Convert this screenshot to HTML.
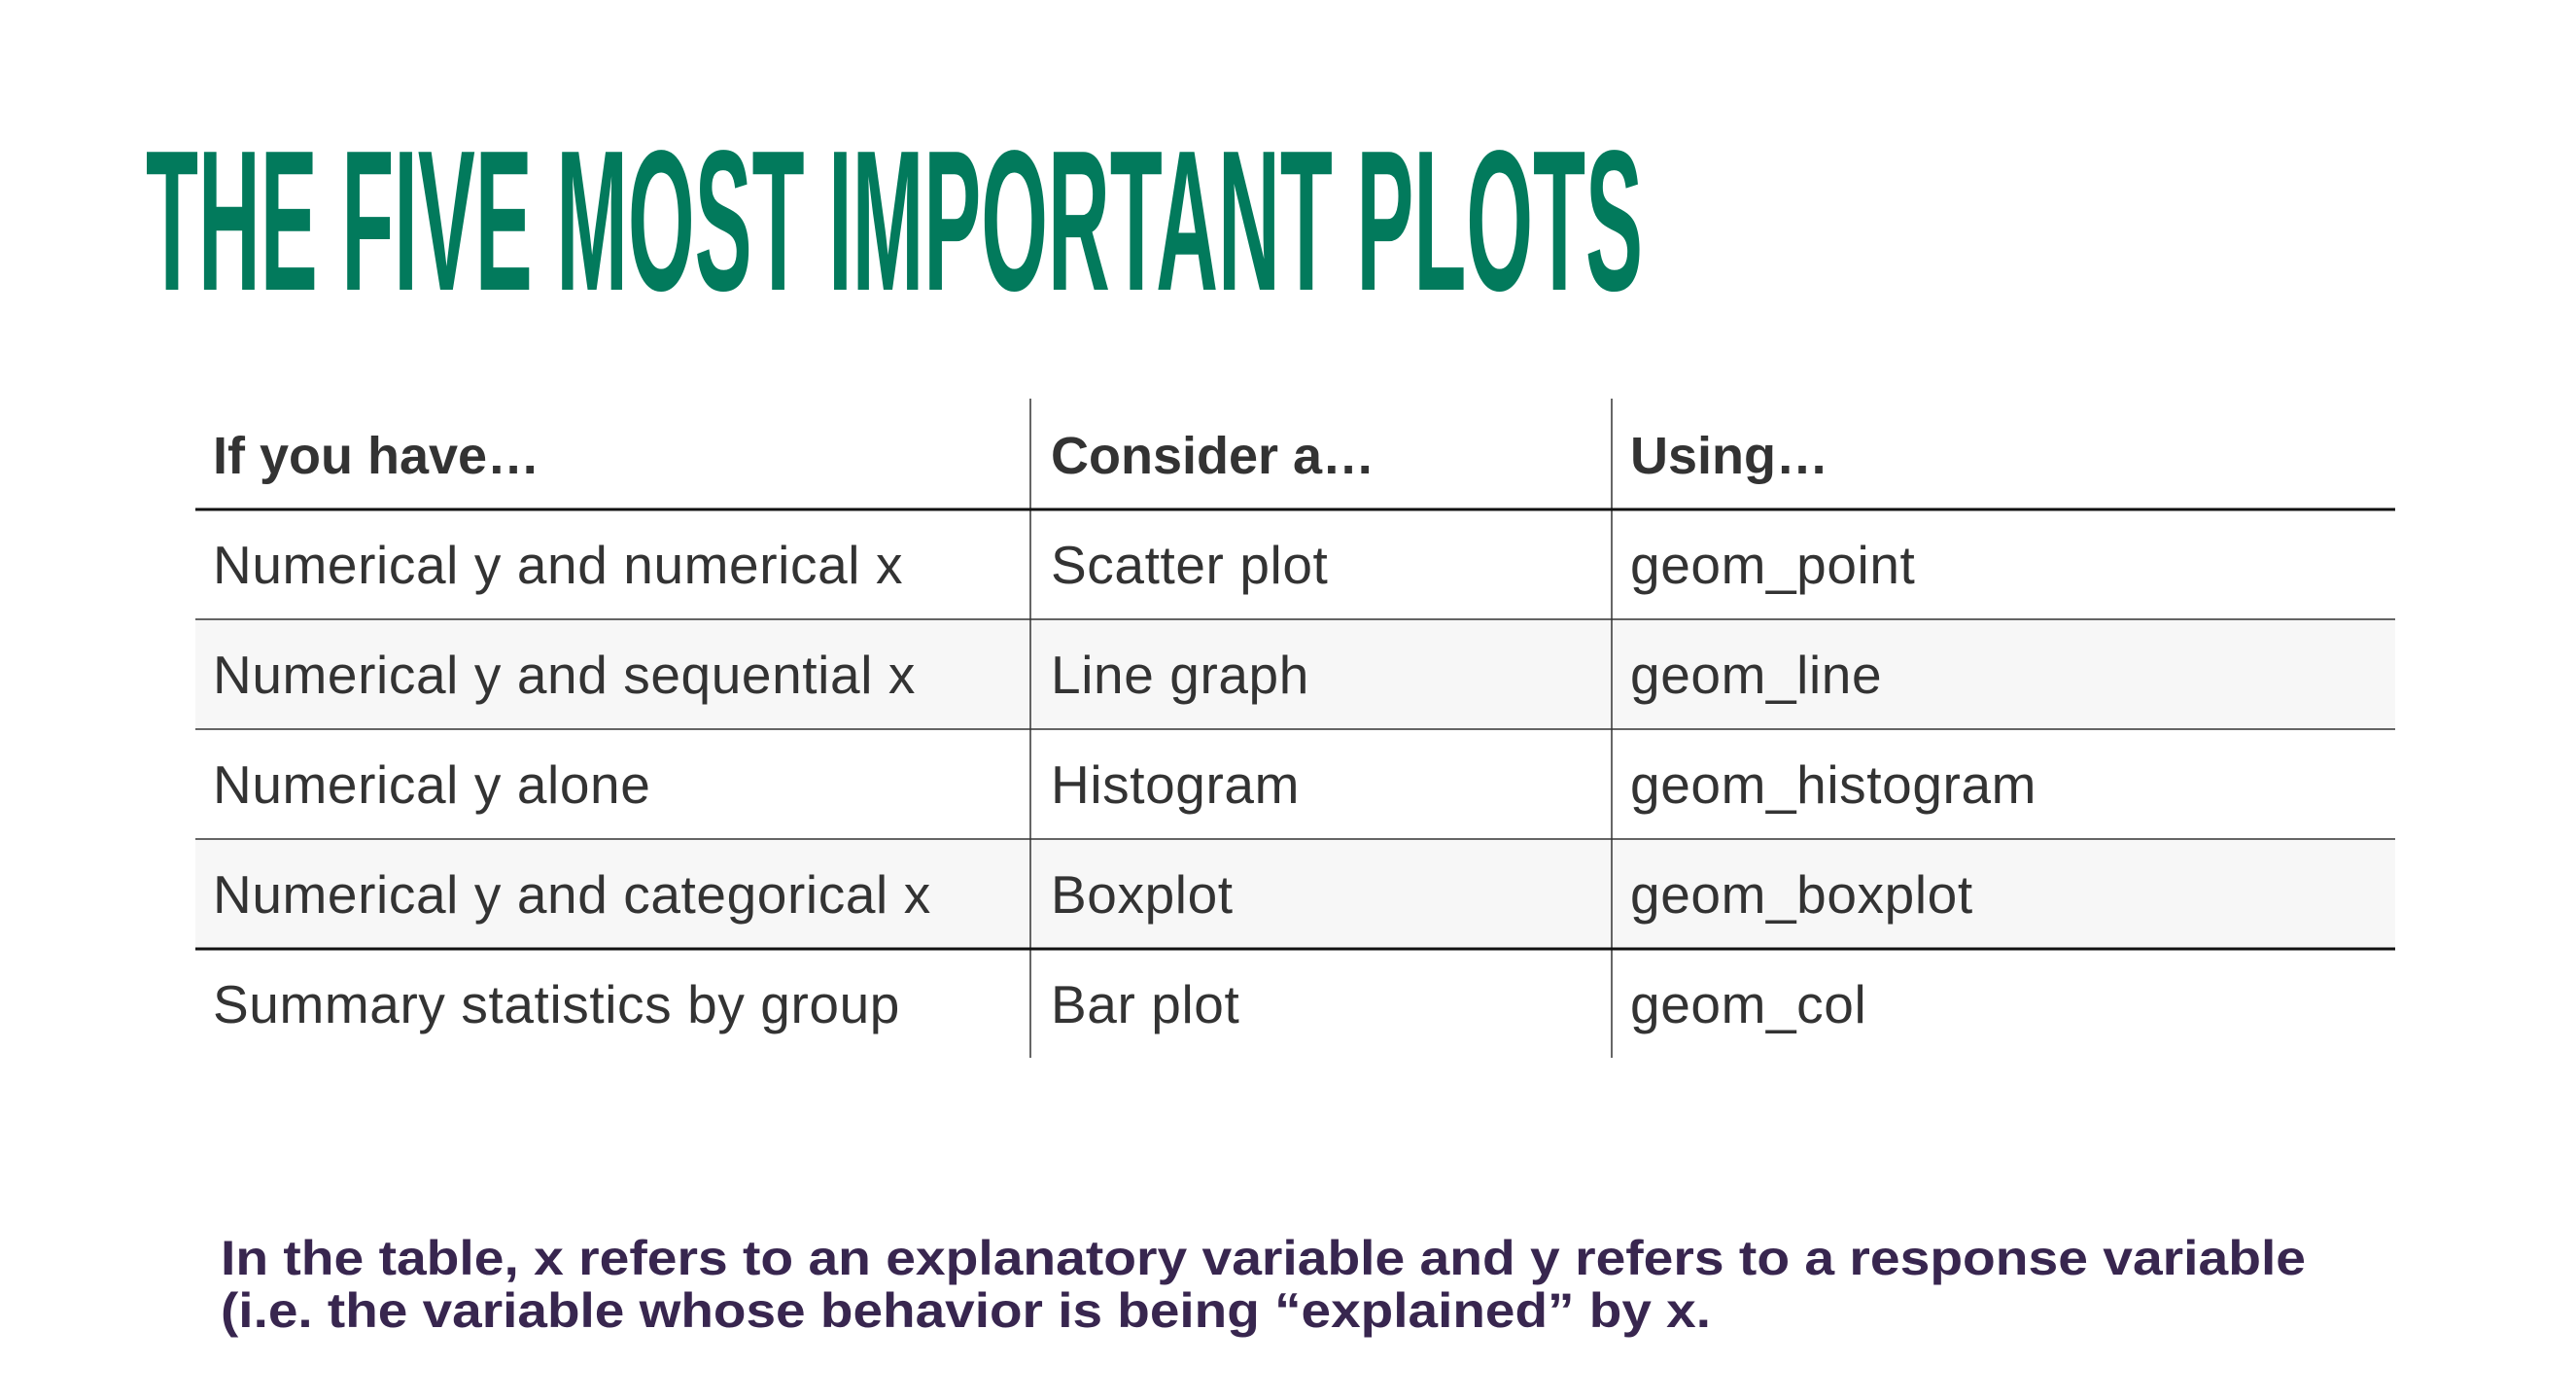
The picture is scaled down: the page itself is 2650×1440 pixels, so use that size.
<!DOCTYPE html>
<html><head><meta charset="utf-8"><style>
html,body{margin:0;padding:0;background:#fff;width:2650px;height:1440px;overflow:hidden}
svg{display:block}
</style></head><body>
<svg width="2650" height="1440" viewBox="0 0 2650 1440" xmlns="http://www.w3.org/2000/svg">
<text x="150" y="298" font-family="Liberation Sans, sans-serif" font-weight="bold" font-size="206" fill="#027a5c" textLength="1540" lengthAdjust="spacingAndGlyphs">THE FIVE MOST IMPORTANT PLOTS</text>
<rect x="201" y="637" width="2263" height="113" fill="#f7f7f7"/>
<rect x="201" y="863" width="2263" height="113" fill="#f7f7f7"/>
<g stroke="#333" stroke-width="1.5">
<line x1="1060" y1="410" x2="1060" y2="1088"/>
<line x1="1658" y1="410" x2="1658" y2="1088"/>
<line x1="201" y1="637" x2="2464" y2="637"/>
<line x1="201" y1="750" x2="2464" y2="750"/>
<line x1="201" y1="863" x2="2464" y2="863"/>
</g>
<g stroke="#111" stroke-width="3">
<line x1="201" y1="524" x2="2464" y2="524"/>
<line x1="201" y1="976" x2="2464" y2="976"/>
</g>
<g font-family="Liberation Sans, sans-serif" font-size="55" letter-spacing="0.6" fill="#333">
<g font-weight="bold" font-size="54" letter-spacing="0">
<text x="219" y="487">If you have…</text>
<text x="1081" y="487">Consider a…</text>
<text x="1677" y="487">Using…</text>
</g>
<text x="219" y="600">Numerical y and numerical x</text>
<text x="1081" y="600">Scatter plot</text>
<text x="1677" y="600">geom_point</text>
<text x="219" y="713">Numerical y and sequential x</text>
<text x="1081" y="713">Line graph</text>
<text x="1677" y="713">geom_line</text>
<text x="219" y="826">Numerical y alone</text>
<text x="1081" y="826">Histogram</text>
<text x="1677" y="826">geom_histogram</text>
<text x="219" y="939">Numerical y and categorical x</text>
<text x="1081" y="939">Boxplot</text>
<text x="1677" y="939">geom_boxplot</text>
<text x="219" y="1052">Summary statistics by group</text>
<text x="1081" y="1052">Bar plot</text>
<text x="1677" y="1052">geom_col</text>
</g>
<g font-family="Liberation Sans, sans-serif" font-weight="bold" font-size="50" fill="#38264f">
<text x="227" y="1311" textLength="2145" lengthAdjust="spacingAndGlyphs">In the table, x refers to an explanatory variable and y refers to a response variable</text>
<text x="227" y="1365" textLength="1533" lengthAdjust="spacingAndGlyphs">(i.e. the variable whose behavior is being “explained” by x.</text>
</g>
</svg>
</body></html>
